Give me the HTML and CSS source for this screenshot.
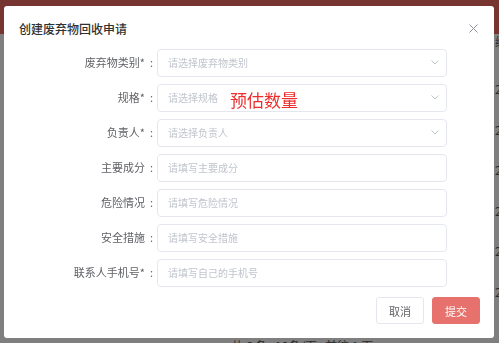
FILE: index.html
```html
<!DOCTYPE html>
<html lang="zh-CN">
<head>
    <meta charset="UTF-8">
    <meta name="viewport" content="width=device-width, initial-scale=1.0">
    <title>创建废弃物回收申请</title>
    <link rel="stylesheet" href="styles.css">
</head>
<body>
    <div class="page">
        <div class="topbar"></div>
        <div class="table">
            <div class="table-head">
                <span class="cell">序号</span>
                <span class="cell">废弃物类别</span>
                <span class="cell">规格</span>
                <span class="cell">负责人</span>
                <span class="cell">编制时间</span>
            </div>
            <div class="table-body">
                <div class="table-row"><span class="cell">1</span><span class="cell">废机油</span><span class="cell">桶装</span><span class="cell">张伟</span><span class="cell">2024-05-12</span></div>
                <div class="table-row"><span class="cell">2</span><span class="cell">废电池</span><span class="cell">箱装</span><span class="cell">李娜</span><span class="cell">2024-05-11</span></div>
                <div class="table-row"><span class="cell">3</span><span class="cell">废油漆</span><span class="cell">桶装</span><span class="cell">王强</span><span class="cell">2024-05-10</span></div>
                <div class="table-row"><span class="cell">4</span><span class="cell">废灯管</span><span class="cell">箱装</span><span class="cell">刘洋</span><span class="cell">2024-05-09</span></div>
                <div class="table-row"><span class="cell">5</span><span class="cell">废溶剂</span><span class="cell">桶装</span><span class="cell">陈静</span><span class="cell">2024-05-08</span></div>
                <div class="table-row"><span class="cell">6</span><span class="cell">废包装</span><span class="cell">袋装</span><span class="cell">赵磊</span><span class="cell">2024-05-07</span></div>
            </div>
            <div class="pager">共 6 条 &nbsp; 10条/页 &nbsp; 前往 1 页</div>
        </div>
    </div>

    <div class="mask"></div>

    <div class="dialog">
        <div class="dialog-header">
            <span class="dialog-title">创建废弃物回收申请</span>
            <svg class="dialog-close" width="9" height="9" viewBox="0 0 9 9"><path d="M0.5 0.5 L8.5 8.5 M8.5 0.5 L0.5 8.5" stroke="#909399" stroke-width="1"/></svg>
        </div>

        <div class="form">
            <label class="form-label">废弃物类别*<span class="colon">:</span></label>
            <div class="field select">
                <input type="text" placeholder="请选择废弃物类别" readonly>
                <svg class="arrow" width="8" height="5" viewBox="0 0 8 5"><path d="M0.5 0.5 L4 4 L7.5 0.5" fill="none" stroke="#c0c4cc" stroke-width="1"/></svg>
            </div>

            <label class="form-label">规格*<span class="colon">:</span></label>
            <div class="field select">
                <input type="text" placeholder="请选择规格" readonly>
                <svg class="arrow" width="8" height="5" viewBox="0 0 8 5"><path d="M0.5 0.5 L4 4 L7.5 0.5" fill="none" stroke="#c0c4cc" stroke-width="1"/></svg>
            </div>

            <label class="form-label">负责人*<span class="colon">:</span></label>
            <div class="field select">
                <input type="text" placeholder="请选择负责人" readonly>
                <svg class="arrow" width="8" height="5" viewBox="0 0 8 5"><path d="M0.5 0.5 L4 4 L7.5 0.5" fill="none" stroke="#c0c4cc" stroke-width="1"/></svg>
            </div>

            <label class="form-label">主要成分<span class="colon">:</span></label>
            <div class="field"><input type="text" placeholder="请填写主要成分"></div>

            <label class="form-label">危险情况<span class="colon">:</span></label>
            <div class="field"><input type="text" placeholder="请填写危险情况"></div>

            <label class="form-label">安全措施<span class="colon">:</span></label>
            <div class="field"><input type="text" placeholder="请填写安全措施"></div>

            <label class="form-label">联系人手机号*<span class="colon">:</span></label>
            <div class="field"><input type="text" placeholder="请填写自己的手机号"></div>
        </div>

        <div class="dialog-footer">
            <button class="btn">取消</button>
            <button class="btn btn-primary">提交</button>
        </div>

        <span class="note">预估数量</span>
    </div>
</body>
</html>
```

FILE: styles.css
```css
body {
    margin: 0;
    width: 499px;
    height: 343px;
    overflow: hidden;
    font-family: "Noto Sans CJK SC", "Liberation Sans", sans-serif;
}
.page {
    background: #fff;
    height: 343px;
}
.topbar {
    height: 34px;
    background: #ef6b63;
}
.table {
    font-size: 12px;
    color: #555;
    padding-left: 11px;
}
.table-head,
.table-row {
    display: flex;
    white-space: nowrap;
}
.table-head {
    height: 16px;
    line-height: 16px;
}
.table-body {
    padding-top: 19px;
}
.table-row {
    height: 40.6px;
    line-height: 40px;
}
.cell {
    width: 121px;
    flex-shrink: 0;
}
.pager {
    padding: 24px 0 0 220px;
    white-space: nowrap;
}
.mask {
    position: fixed;
    inset: 0;
    background: rgba(0, 0, 0, 0.5);
}
.dialog {
    position: absolute;
    top: 6px;
    left: 4px;
    width: 490px;
    height: 332px;
    background: #fff;
    border-radius: 3px;
}
.dialog-header {
    display: flex;
    justify-content: space-between;
    align-items: center;
    padding: 13px 16px 0 15px;
    height: 18px;
}
.dialog-title {
    font-size: 12px;
    font-weight: 500;
    color: #303133;
}
.form {
    display: grid;
    grid-template-columns: 153px 290px;
    row-gap: 7px;
    margin-top: 11px;
}
.form-label {
    align-self: center;
    text-align: right;
    font-size: 11px;
    color: #606266;
}
.colon {
    margin: 0 4px 0 5px;
}
.field {
    position: relative;
    height: 28px;
}
.field input {
    box-sizing: border-box;
    width: 100%;
    height: 28px;
    border: 1px solid #e4e7ed;
    border-radius: 4px;
    padding: 0 10px;
    font-family: inherit;
    font-size: 10px;
    color: #606266;
    outline: none;
}
.field input::placeholder {
    color: #c0c4cc;
}
.arrow {
    position: absolute;
    right: 8px;
    top: 12px;
}
.dialog-footer {
    display: flex;
    justify-content: flex-end;
    gap: 8px;
    margin-top: 11px;
    padding-right: 14px;
}
.btn {
    width: 48px;
    height: 27px;
    border: 1px solid #e4e7ed;
    border-radius: 3px;
    background: #fff;
    color: #606266;
    font-family: inherit;
    font-size: 11px;
    padding: 0;
}
.btn-primary {
    background: #e6716d;
    border-color: #e6716d;
    color: #fff;
}
.note {
    position: absolute;
    left: 226px;
    top: 82px;
    font-size: 17px;
    line-height: 24px;
    color: #ee2e2e;
}
```
